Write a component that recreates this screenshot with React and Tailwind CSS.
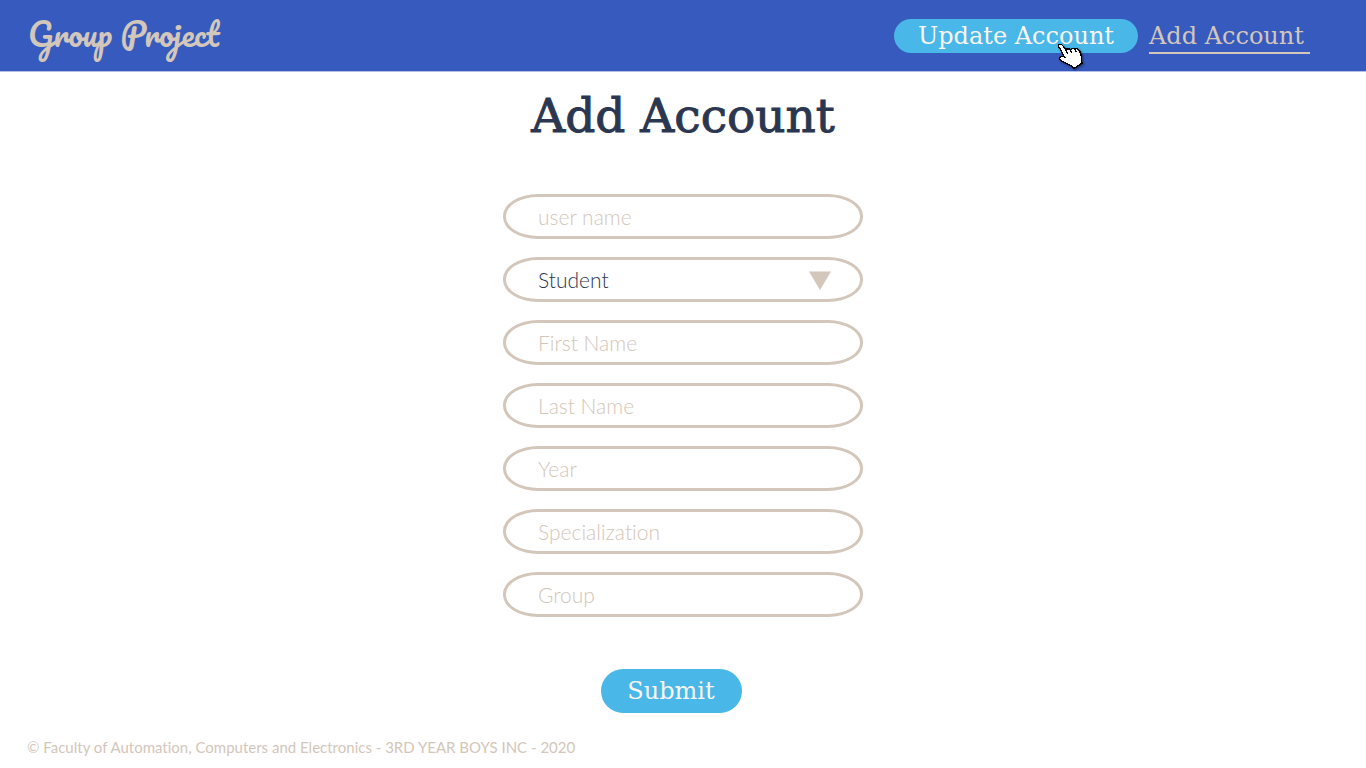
import React from "react";

const fieldFrame =
  "flex h-[45px] items-center rounded-[35px/22px] border-3 border-[#d3c6ba] bg-white";

const fieldText =
  "w-full bg-transparent px-8 font-['Lato',sans-serif] text-[21px] leading-6 font-light text-[#2b3651] outline-none [font-variant-ligatures:none] placeholder:text-[#d3c6ba] placeholder:opacity-100";

function TextField({ name, label }) {
  return (
    <div className={fieldFrame}>
      <input type="text" name={name} aria-label={label} placeholder={label} className={fieldText} />
    </div>
  );
}

function RoleSelect() {
  return (
    <div className={`${fieldFrame} relative`}>
      <select name="role" aria-label="Role" defaultValue="Student" className={`${fieldText} appearance-none`}>
        <option>Student</option>
      </select>
      <svg
        className="pointer-events-none absolute top-[11px] right-[29px] h-[19px] w-[22px]"
        viewBox="0 0 22 19"
        aria-hidden="true"
      >
        <path d="M0 0.5H22L11 19Z" fill="#d3c6ba" />
      </svg>
    </div>
  );
}

function HandPointer() {
  return (
    <svg
      className="pointer-events-none absolute top-[24px] right-[53px] h-[28px] w-[28px] drop-shadow-[1px_1px_1px_rgba(0,0,0,0.5)]"
      viewBox="0 0 28 28"
      shapeRendering="crispEdges"
      aria-hidden="true"
    >
      <path
        d="M2 1.5H4.5L7 4L9 7.5L10 6H12.5L14 7L15 5.5H17L18.5 7V5.5H20.5L23 9L24.5 13.5V18L25 20L17 25.5L14 22.5L9 20.5L4 17.5L2.5 15.5L3.5 13.5H6.5L7.5 14L4 7.5L1.5 3.5Z"
        fill="#fff"
        stroke="#000"
        strokeWidth="1.4"
      />
      <path d="M9 7.5L11 11M13 7L15 10M18 6.5L19.5 9M7 13.5L8.5 15.5" fill="none" stroke="#000" strokeWidth="1.2" />
    </svg>
  );
}

export default function App() {
  return (
    <div className="flex min-h-screen flex-col bg-white font-['Lato',sans-serif]">
      <header className="flex h-[72px] items-start justify-between border-b border-[#b3c1ea] bg-[#365abd] pr-14 pl-7">
        <a
          href="#home"
          className="pt-2.5 font-['Pacifico',cursive] text-[32px] leading-[46px] text-[#d3c6ba]"
        >
          Group Project
        </a>
        <nav className="flex gap-[11px] pt-[19px] font-['DejaVu_Serif',serif] text-[24px]">
          <a
            href="#update"
            className="relative flex h-[34px] w-[244px] items-center justify-center rounded-full bg-[#49b7e7] leading-[34px] text-[#f8f5f1]"
          >
            Update Account
            <HandPointer />
          </a>
          <a
            href="#add"
            aria-current="page"
            className="h-[35px] w-[161px] border-b-2 border-[#d3c6ba] leading-[34px] whitespace-nowrap text-[#d3c6ba]"
          >
            Add Account
          </a>
        </nav>
      </header>

      <main className="flex flex-1 flex-col items-center">
        <h1 className="pt-[14px] font-['DejaVu_Serif',serif] text-[47px] leading-[60px] text-[#2b3651] [-webkit-text-stroke:1px_#2b3651]">
          Add Account
        </h1>
        <form className="mt-12 flex w-[360px] max-w-full flex-col gap-[18px]" onSubmit={(e) => e.preventDefault()}>
          <TextField name="username" label="user name" />
          <RoleSelect />
          <TextField name="firstName" label="First Name" />
          <TextField name="lastName" label="Last Name" />
          <TextField name="year" label="Year" />
          <TextField name="specialization" label="Specialization" />
          <TextField name="group" label="Group" />
          <div className="flex justify-center pt-[34px] pr-6">
            <button
              type="submit"
              className="h-11 w-[141px] rounded-full bg-[#49b7e7] font-['DejaVu_Serif',serif] text-[24px] leading-[44px] text-[#f8f5f1]"
            >
              Submit
            </button>
          </div>
        </form>
      </main>

      <footer className="px-[27px] pb-[11px] text-[15px] leading-5 text-[#d3c6ba] [font-variant-ligatures:none]">
        © Faculty of Automation, Computers and Electronics - 3RD YEAR BOYS INC - 2020
      </footer>
    </div>
  );
}
